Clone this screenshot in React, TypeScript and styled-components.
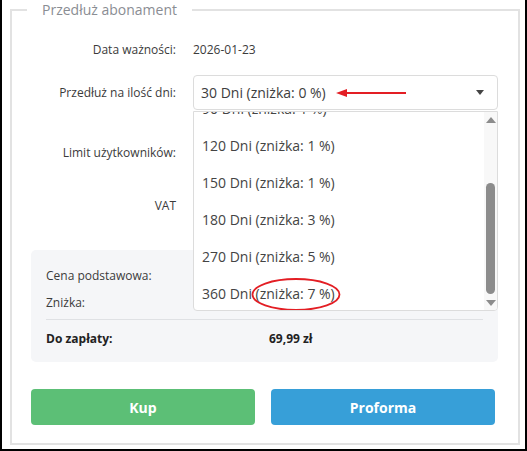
import styled, { createGlobalStyle } from "styled-components";

const GlobalStyle = createGlobalStyle`
  html, body {
    margin: 0;
    padding: 0;
    background: #fff;
  }
  body {
    font-family: "Open Sans", "Liberation Sans", sans-serif;
  }
`;

const Frame = styled.div`
  width: 527px;
  height: 451px;
  box-sizing: border-box;
  border: 2px solid #000;
  border-top: none;
  background: #fff;
  padding: 0 5px 4px 8px;
  display: flex;
`;

const Fieldset = styled.fieldset`
  flex: 1;
  min-width: 0;
  margin: 0;
  border: 2px solid #e2e2e2;
  padding: 12px 20px 18px 19px;
  display: flex;
  flex-direction: column;
`;

const Legend = styled.legend`
  margin-left: -4px;
  padding: 0 15px;
  font-size: 14px;
  line-height: 20px;
  color: #8a8d93;
`;

const FormRow = styled.div<{ $h: number; $mt?: number }>`
  display: grid;
  grid-template-columns: 145px 1fr;
  column-gap: 17px;
  align-items: center;
  height: ${(p) => p.$h}px;
  margin-top: ${(p) => p.$mt ?? 0}px;
`;

const Label = styled.div`
  text-align: right;
  font-size: 12px;
  color: #3b3b3b;
`;

const Value = styled.div`
  font-size: 12px;
  color: #3b3b3b;
`;

const Select = styled.div`
  position: relative;
  height: 35px;
  box-sizing: border-box;
  border: 1px solid #dcdcdc;
  border-radius: 4px;
  padding: 0 7px;
  display: flex;
  align-items: center;
  justify-content: space-between;
  font-size: 14px;
  color: #3d3d3d;
  background: #fff;
`;

const Caret = styled.span`
  width: 0;
  height: 0;
  border-left: 4px solid transparent;
  border-right: 4px solid transparent;
  border-top: 5px solid #444;
  margin-right: 6px;
`;

const Input = styled.div`
  height: 35px;
  box-sizing: border-box;
  border: 1px solid #dcdcdc;
  border-radius: 4px;
`;

const Dropdown = styled.div`
  position: absolute;
  top: 35px;
  left: -1px;
  right: -1px;
  height: 200px;
  box-sizing: border-box;
  border: 1px solid #dcdcdc;
  border-radius: 0 0 4px 4px;
  background: #fff;
  display: flex;
  z-index: 2;
  overflow: hidden;
`;

const Options = styled.div`
  position: relative;
  flex: 1;
  overflow: hidden;
`;

const OptionList = styled.ul`
  list-style: none;
  margin: -96px 0 0;
  padding: 0;
`;

const Option = styled.li`
  height: 37px;
  line-height: 37px;
  padding-left: 8px;
  font-size: 14px;
  color: #444;
  white-space: nowrap;
`;

const ScrollTrack = styled.div`
  width: 13px;
  background: #f8f8f8;
  display: flex;
  flex-direction: column;
  align-items: center;
  padding-top: 5px;
`;

const Triangle = styled.span<{ $up?: boolean }>`
  width: 0;
  height: 0;
  border-left: 5px solid transparent;
  border-right: 5px solid transparent;
  ${(p) =>
    p.$up ? "border-bottom: 6px solid #8c8c8c;" : "border-top: 6px solid #8c8c8c;"}
`;

const Thumb = styled.div`
  width: 9px;
  height: 111px;
  border-radius: 5px;
  background: #8c8c8c;
  margin: 60px 0 6px;
`;

const ArrowNote = styled.svg`
  position: absolute;
  left: 142px;
  top: 11px;
  z-index: 3;
`;

const CircleNote = styled.svg`
  position: absolute;
  left: 57px;
  top: 165px;
  z-index: 3;
`;

const Summary = styled.div`
  margin-top: 27px;
  height: 112px;
  box-sizing: border-box;
  background: #f5f6f8;
  border-radius: 5px;
  padding: 12px 15px 10px;
`;

const SummaryRow = styled.div<{ $bold?: boolean; $mt?: number }>`
  display: grid;
  grid-template-columns: 223px 1fr;
  align-items: center;
  height: 27px;
  margin-top: ${(p) => p.$mt ?? 0}px;
  font-size: 12px;
  font-weight: ${(p) => (p.$bold ? 700 : 400)};
  color: ${(p) => (p.$bold ? "#222" : "#3b3b3b")};
`;

const Divider = styled.div`
  height: 1px;
  background: #dfe1e4;
  margin-top: 3px;
`;

const Buttons = styled.div`
  margin-top: 27px;
  display: grid;
  grid-template-columns: 224px 224px;
  column-gap: 16px;
`;

const Button = styled.button<{ $color: string }>`
  height: 36px;
  border: none;
  border-radius: 4px;
  background: ${(p) => p.$color};
  color: #fff;
  font-family: "Open Sans", "Liberation Sans", sans-serif;
  font-size: 14px;
  font-weight: 700;
`;

const options = [30, 60, 90, 120, 150, 180, 270, 360];
const discounts: Record<number, number> = {
  30: 0,
  60: 0,
  90: 1,
  120: 1,
  150: 1,
  180: 3,
  270: 5,
  360: 7,
};

export default function App() {
  return (
    <Frame>
      <GlobalStyle />
      <Fieldset>
        <Legend>Przedłuż abonament</Legend>

        <FormRow $h={34}>
          <Label>Data ważności:</Label>
          <Value>2026-01-23</Value>
        </FormRow>

        <FormRow $h={35} $mt={9}>
          <Label>Przedłuż na ilość dni:</Label>
          <Select>
            <span>30 Dni (zniżka: 0 %)</span>
            <Caret />
            <ArrowNote width="72" height="12" viewBox="0 0 72 12">
              <polygon points="0,6 11,2 11,10" fill="#e31e24" />
              <line x1="10" y1="6" x2="70" y2="6" stroke="#e31e24" strokeWidth="2" />
            </ArrowNote>
            <Dropdown>
              <Options>
                <OptionList>
                  {options.map((d) => (
                    <Option key={d}>{`${d} Dni (zniżka: ${discounts[d]} %)`}</Option>
                  ))}
                </OptionList>
                <CircleNote width="90" height="35" viewBox="0 0 90 35">
                  <ellipse
                    cx="45"
                    cy="17.5"
                    rx="43.5"
                    ry="15.5"
                    fill="none"
                    stroke="#e31e24"
                    strokeWidth="1.8"
                  />
                </CircleNote>
              </Options>
              <ScrollTrack>
                <Triangle $up />
                <Thumb />
                <Triangle />
              </ScrollTrack>
            </Dropdown>
          </Select>
        </FormRow>

        <FormRow $h={35} $mt={25}>
          <Label>Limit użytkowników:</Label>
          <Input />
        </FormRow>

        <FormRow $h={35} $mt={18}>
          <Label>VAT</Label>
          <Input />
        </FormRow>

        <Summary>
          <SummaryRow>
            <span>Cena podstawowa:</span>
            <span>69,99 zł</span>
          </SummaryRow>
          <SummaryRow>
            <span>Zniżka:</span>
            <span>0,00 zł</span>
          </SummaryRow>
          <Divider />
          <SummaryRow $bold $mt={5}>
            <span>Do zapłaty:</span>
            <span>69,99 zł</span>
          </SummaryRow>
        </Summary>

        <Buttons>
          <Button $color="#5cbf76">Kup</Button>
          <Button $color="#379fd8">Proforma</Button>
        </Buttons>
      </Fieldset>
    </Frame>
  );
}
